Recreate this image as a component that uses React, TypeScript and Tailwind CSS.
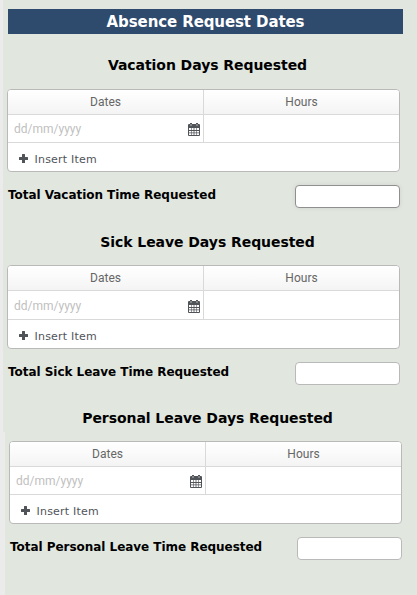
interface RequestSectionProps {
  title: string
  totalLabel: string
  className: string
  titleWidth?: string
  tableGap?: string
  rowClass?: string
  inputClass?: string
}

function CalendarIcon() {
  return (
    <svg width="12" height="13" viewBox="0 0 12 13" fill="#505459" aria-hidden="true">
      <path
        fillRule="evenodd"
        d="M2 0h2v1h4V0h2v1h1q1 0 1 1v10q0 1-1 1H1q-1 0-1-1V2q0-1 1-1h1zM1 5v2h2V5zM3.600 5v2h2V5zM6.400 5v2h2V5zM9 5v2h2V5zM1 8v1.500h2V8zM3.600 8v1.500h2V8zM6.400 8v1.500h2V8zM9 8v1.500h2V8zM1 10.300v1.700h2v-1.700zM3.600 10.300v1.700h2v-1.700zM6.400 10.300v1.700h2v-1.700zM9 10.300v1.700h2v-1.700zM2.700 1v2h.6V1zM8.700 1v2h.6V1z"
      />
    </svg>
  )
}

function PlusIcon() {
  return (
    <svg width="9" height="9" viewBox="0 0 9 9" fill="#505459" aria-hidden="true" className="-mt-1">
      <path d="M3.500 0h2q.5 0 .5.5V3h2.500q.5 0 .5.5v2q0 .5-.5.5H6v2.500q0 .5-.5.5h-2q-.5 0-.5-.5V6H.5Q0 6 0 5.500v-2Q0 3 .5 3H3V.5q0-.5.5-.5z" />
    </svg>
  )
}

function RequestSection({
  title,
  totalLabel,
  className,
  titleWidth = 'w-[401px]',
  tableGap = 'mt-[13px]',
  rowClass = 'h-[28px]',
  inputClass = 'border-[#b9b9b9]',
}: RequestSectionProps) {
  return (
    <section className={className}>
      <h2
        className={`flex h-5 items-center justify-center text-[14px] font-bold tracking-[-0.06px] whitespace-nowrap text-black ${titleWidth}`}
      >
        {title}
      </h2>

      <div className={`w-[393px] overflow-hidden rounded-[4px] border border-[#b9b9b9] bg-white ${tableGap}`}>
        <div className="grid h-[25px] grid-cols-[196px_1fr] border-b border-[#d9d9d9] bg-linear-to-b from-white to-[#f4f4f4] text-center font-[Roboto,sans-serif] text-[12px] leading-[24px] text-[#666]">
          <div className="border-r border-[#d9d9d9]">Dates</div>
          <div>Hours</div>
        </div>
        <div className={`grid grid-cols-[196px_1fr] border-b border-[#d9d9d9] ${rowClass}`}>
          <div className="flex items-center justify-between border-r border-[#d9d9d9] pt-[2px] pr-[3px] pl-[6px]">
            <input
              type="text"
              placeholder="dd/mm/yyyy"
              className="-mt-px w-[120px] font-[Roboto,sans-serif] text-[12px] outline-none placeholder:text-[#bfbfbf]"
            />
            <CalendarIcon />
          </div>
          <input type="text" aria-label="Hours" className="w-full px-1.5 text-xs outline-none" />
        </div>
        <button
          type="button"
          className="flex h-[28px] items-center gap-[6.500px] pt-[6px] pl-[11px] text-[11px] tracking-[0.22px] text-[#505459]"
        >
          <PlusIcon />
          <span>Insert Item</span>
        </button>
      </div>

      <div className="mt-[13px] flex w-[393px] justify-between">
        <span className="pl-px text-[12px] leading-[21px] font-bold tracking-[-0.04px] whitespace-nowrap text-black">
          {totalLabel}
        </span>
        <input
          type="text"
          aria-label={totalLabel}
          className={`h-[23px] w-[105px] rounded-[4px] border bg-white px-1.5 text-xs outline-none ${inputClass}`}
        />
      </div>
    </section>
  )
}

function App() {
  return (
    <main className="h-[595px] w-[417px] overflow-hidden bg-[#e1e7df] font-[Verdana,'DejaVu_Sans',sans-serif]">
      <div className="h-[432px] border-l-[3px] border-[#ebebeb] pt-[9px]">
        <h1 className="ml-[5px] flex h-[25px] w-[395px] items-center justify-center bg-[#2e4a6d] pt-px text-[15px] font-bold tracking-[-0.1px] whitespace-nowrap text-white">
          Absence Request Dates
        </h1>
        <RequestSection
          title="Vacation Days Requested"
          totalLabel="Total Vacation Time Requested"
          className="mt-[21px] ml-[4px]"
          tableGap="mt-[14px]"
          inputClass="border-[#8f8f8f] shadow-[0_0_5px_rgba(0,0,0,0.08)]"
        />
        <RequestSection
          title="Sick Leave Days Requested"
          totalLabel="Total Sick Leave Time Requested"
          className="mt-[24px] ml-[4px]"
          rowClass="h-[29px]"
        />
      </div>
      <div className="flow-root h-[163px] border-l-[5px] border-[#ebebeb]">
        <RequestSection
          title="Personal Leave Days Requested"
          totalLabel="Total Personal Leave Time Requested"
          className="-mt-[24px] ml-[4px]"
          titleWidth="w-[397px]"
        />
      </div>
    </main>
  )
}

export default App
